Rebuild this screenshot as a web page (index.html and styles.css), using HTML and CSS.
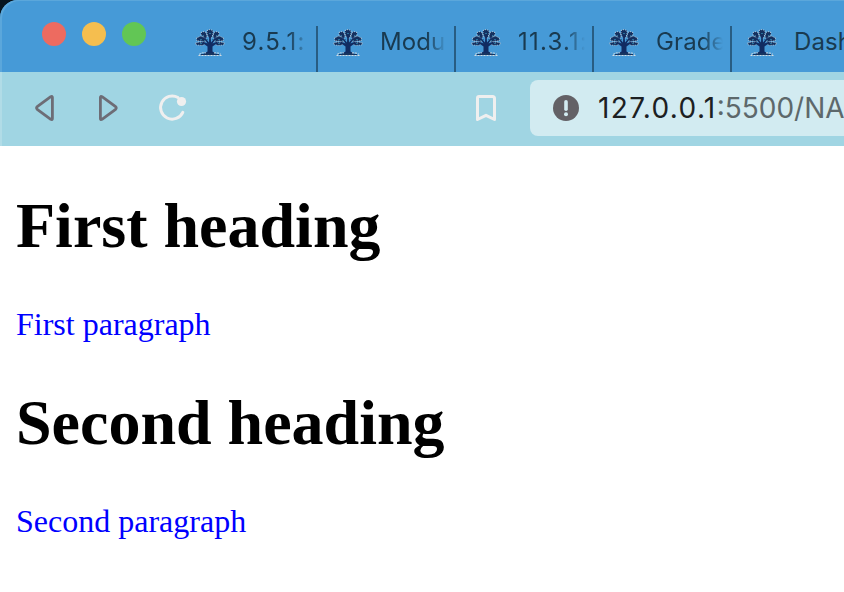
FILE: index.html
```
<!DOCTYPE html>
<html lang="en">
<head>
<meta charset="utf-8">
<title>Headings and paragraphs</title>
<link rel="stylesheet" href="styles.css">
</head>
<body>
<svg class="defs" aria-hidden="true">
  <symbol id="tree" viewBox="0 0 30 27">
    <g fill="#14305f" stroke="#c3d4e0" stroke-width="0.900" stroke-dasharray="1 1.200">
      <path d="M12 1.500l3-1 3 1 0 3-1 4-2 1-2-2-1-3z"/>
      <path d="M6 3.500l3-1 2 1 1 4-1 2-3-2-2-2z"/>
      <path d="M24 3.500l-3-1-2 1-1 4 1 2 3-2 2-2z"/>
      <path d="M1.500 9l4-2 3 1 2.500 3-1 2-4-1-4 0z"/>
      <path d="M28.500 9l-4-2-3 1-2.500 3 1 2 4-1 4 0z"/>
      <path d="M.5 14l4-1 5 .5 1 1.500-3 1.500-6-.5z"/>
      <path d="M29.500 14l-4-1-5 .5-1 1.500 3 1.500 6-.5z"/>
    </g>
    <path d="M12.500 17.500L7 13.500l.8-1 4.700 2-4-6 1-.6 4.500 5.600.3-7h1.400l.3 7 4.500-5.600 1 .6-4 6 4.700-2 .8 1-5.500 4V22.500l4 2.500h-13l4-2.500z" fill="#112c62"/>
    <path d="M9 11.500h1M20 11.500h1M12 10.500h1M17 10.500h1M8 6.500h1M21 6.500h1M14 4.500h2M5 10.500h2M23 10.500h2M5 14.500h2M23 14.500h2" stroke="#28709a"/>
    <path d="M4 25.500q3-2.500 7-1.500M19 24q5-.5 7 1.500M3.500 26.500h23" fill="none" stroke="#d4dce1" stroke-width="1" stroke-dasharray="2 1"/>
    <path d="M6 25.500h18M11 24.500h8" fill="none" stroke="#173560" stroke-width="1"/>
  </symbol>
</svg>
<div class="window">
  <header class="tabbar">
    <div class="lights"><span class="close"></span><span class="minimize"></span><span class="maximize"></span></div>
    <nav class="tabs">
      <div class="tab"><svg class="favicon"><use href="#tree"/></svg><span class="title numeric">9.5.1:</span></div>
      <div class="tab"><svg class="favicon"><use href="#tree"/></svg><span class="title">Modul</span></div>
      <div class="tab"><svg class="favicon"><use href="#tree"/></svg><span class="title numeric">11.3.1:</span></div>
      <div class="tab"><svg class="favicon"><use href="#tree"/></svg><span class="title">Grade</span></div>
      <div class="tab"><svg class="favicon"><use href="#tree"/></svg><span class="title open">Dash</span></div>
    </nav>
  </header>
  <div class="toolbar">
    <svg class="controls" viewBox="0 0 500 74" fill="none" stroke-linecap="round" stroke-linejoin="round">
      <path class="arrow" d="M50.800 24.700Q52.400 23.800 52.400 25.600V46.400Q52.400 48.200 50.800 47.300L37.200 37.300Q36 36 37.200 34.700Z"/>
      <path class="arrow" d="M102 24.700Q100.400 23.800 100.400 25.600V46.400Q100.400 48.200 102 47.300L115.600 37.300Q116.800 36 115.600 34.700Z"/>
      <path class="light" d="M178 25.500A11.600 11.600 0 1 0 182.800 40.300"/>
      <circle cx="181.500" cy="29.500" r="4.600" fill="#efefef"/>
      <path class="light" d="M478.500 24.500H492.500Q494.500 24.500 494.500 26.500V47.500L486 43.300L477.500 47.500V26Q477.500 24.500 479 24.500Z"/>
    </svg>
    <div class="address">
      <svg class="info" viewBox="0 0 26 26"><circle cx="13" cy="13" r="13" fill="#636166"/><path d="M13 6.800v7.400" stroke="#d2ebf1" stroke-width="3.600" stroke-linecap="round"/><circle cx="13" cy="19.200" r="2" fill="#d2ebf1"/></svg>
      <span class="url"><span class="host">127.0.0.1</span><span class="path">:5500/NA</span></span>
    </div>
  </div>
  <main>
    <h1>First heading</h1>
    <p>First paragraph</p>
    <h1>Second heading</h1>
    <p>Second paragraph</p>
  </main>
</div>
</body>
</html>
```
FILE: styles.css
```
* { box-sizing: border-box; }
body { margin: 0; background: #fff; overflow: hidden; }
.defs { display: none; }
.window {
  width: 844px;
  height: 592px;
  overflow: hidden;
  background: linear-gradient(#07151f 0 30px, #fff 30px);
}
.tabbar {
  display: flex;
  height: 72px;
  background: #469ad7;
  box-shadow: inset 2px 1px 0 #5ba7db;
  border-top-left-radius: 18px;
}
.lights { display: flex; flex: none; gap: 16px; width: 180px; padding: 22px 0 0 42px; }
.lights span { width: 24px; height: 24px; border-radius: 50%; }
.close { background: #ed6b60; }
.minimize { background: #f5be4f; }
.maximize { background: #62c655; }
.tabs { display: flex; flex: none; padding-top: 26px; }
.tab {
  display: flex;
  flex: none;
  width: 138px;
  height: 46px;
  padding-left: 15px;
  border-right: 2px solid #285d83;
}
.favicon { flex: none; width: 30px; height: 27px; margin-top: 3px; }
.title {
  flex: none;
  width: 68px;
  margin-left: 17px;
  font: 24px/32px Inter, "Liberation Sans", sans-serif;
  letter-spacing: 0.1px;
  white-space: nowrap;
  color: #193a50;
  -webkit-mask-image: linear-gradient(to right, #000 46px, transparent 67px);
  mask-image: linear-gradient(to right, #000 46px, transparent 67px);
}
.title.numeric { letter-spacing: 1.2px; }
.title.open { -webkit-mask-image: none; mask-image: none; }
.toolbar {
  display: flex;
  height: 74px;
  background: #a0d5e3;
  box-shadow: inset 2px 0 0 #b1dce7;
}
.controls { flex: none; width: 500px; height: 74px; }
.arrow { stroke: #6d6d76; stroke-width: 2.8; }
.light { stroke: #efefef; stroke-width: 3; }
.address {
  display: flex;
  flex: none;
  width: 340px;
  height: 56px;
  margin: 8px 0 0 30px;
  padding-left: 23px;
  border-radius: 8px;
  background: #d2ebf1;
}
.info { flex: none; width: 26px; height: 26px; margin-top: 15px; }
.url {
  margin-left: 19px;
  font: 28px/56px Inter, "Liberation Sans", sans-serif;
  white-space: nowrap;
  color: #1c2022;
}
.host { letter-spacing: 1.35px; }
.path { color: #5d686b; }
main {
  display: flow-root;
  height: 446px;
  padding: 0 16px;
  background: #fff;
  font-family: "Liberation Serif", serif;
}
h1 { margin: 43px 0; font-size: 64px; line-height: 74px; font-weight: bold; color: #000; }
p { margin: 43px 0; font-size: 32px; line-height: 37px; color: #00f; }
```
